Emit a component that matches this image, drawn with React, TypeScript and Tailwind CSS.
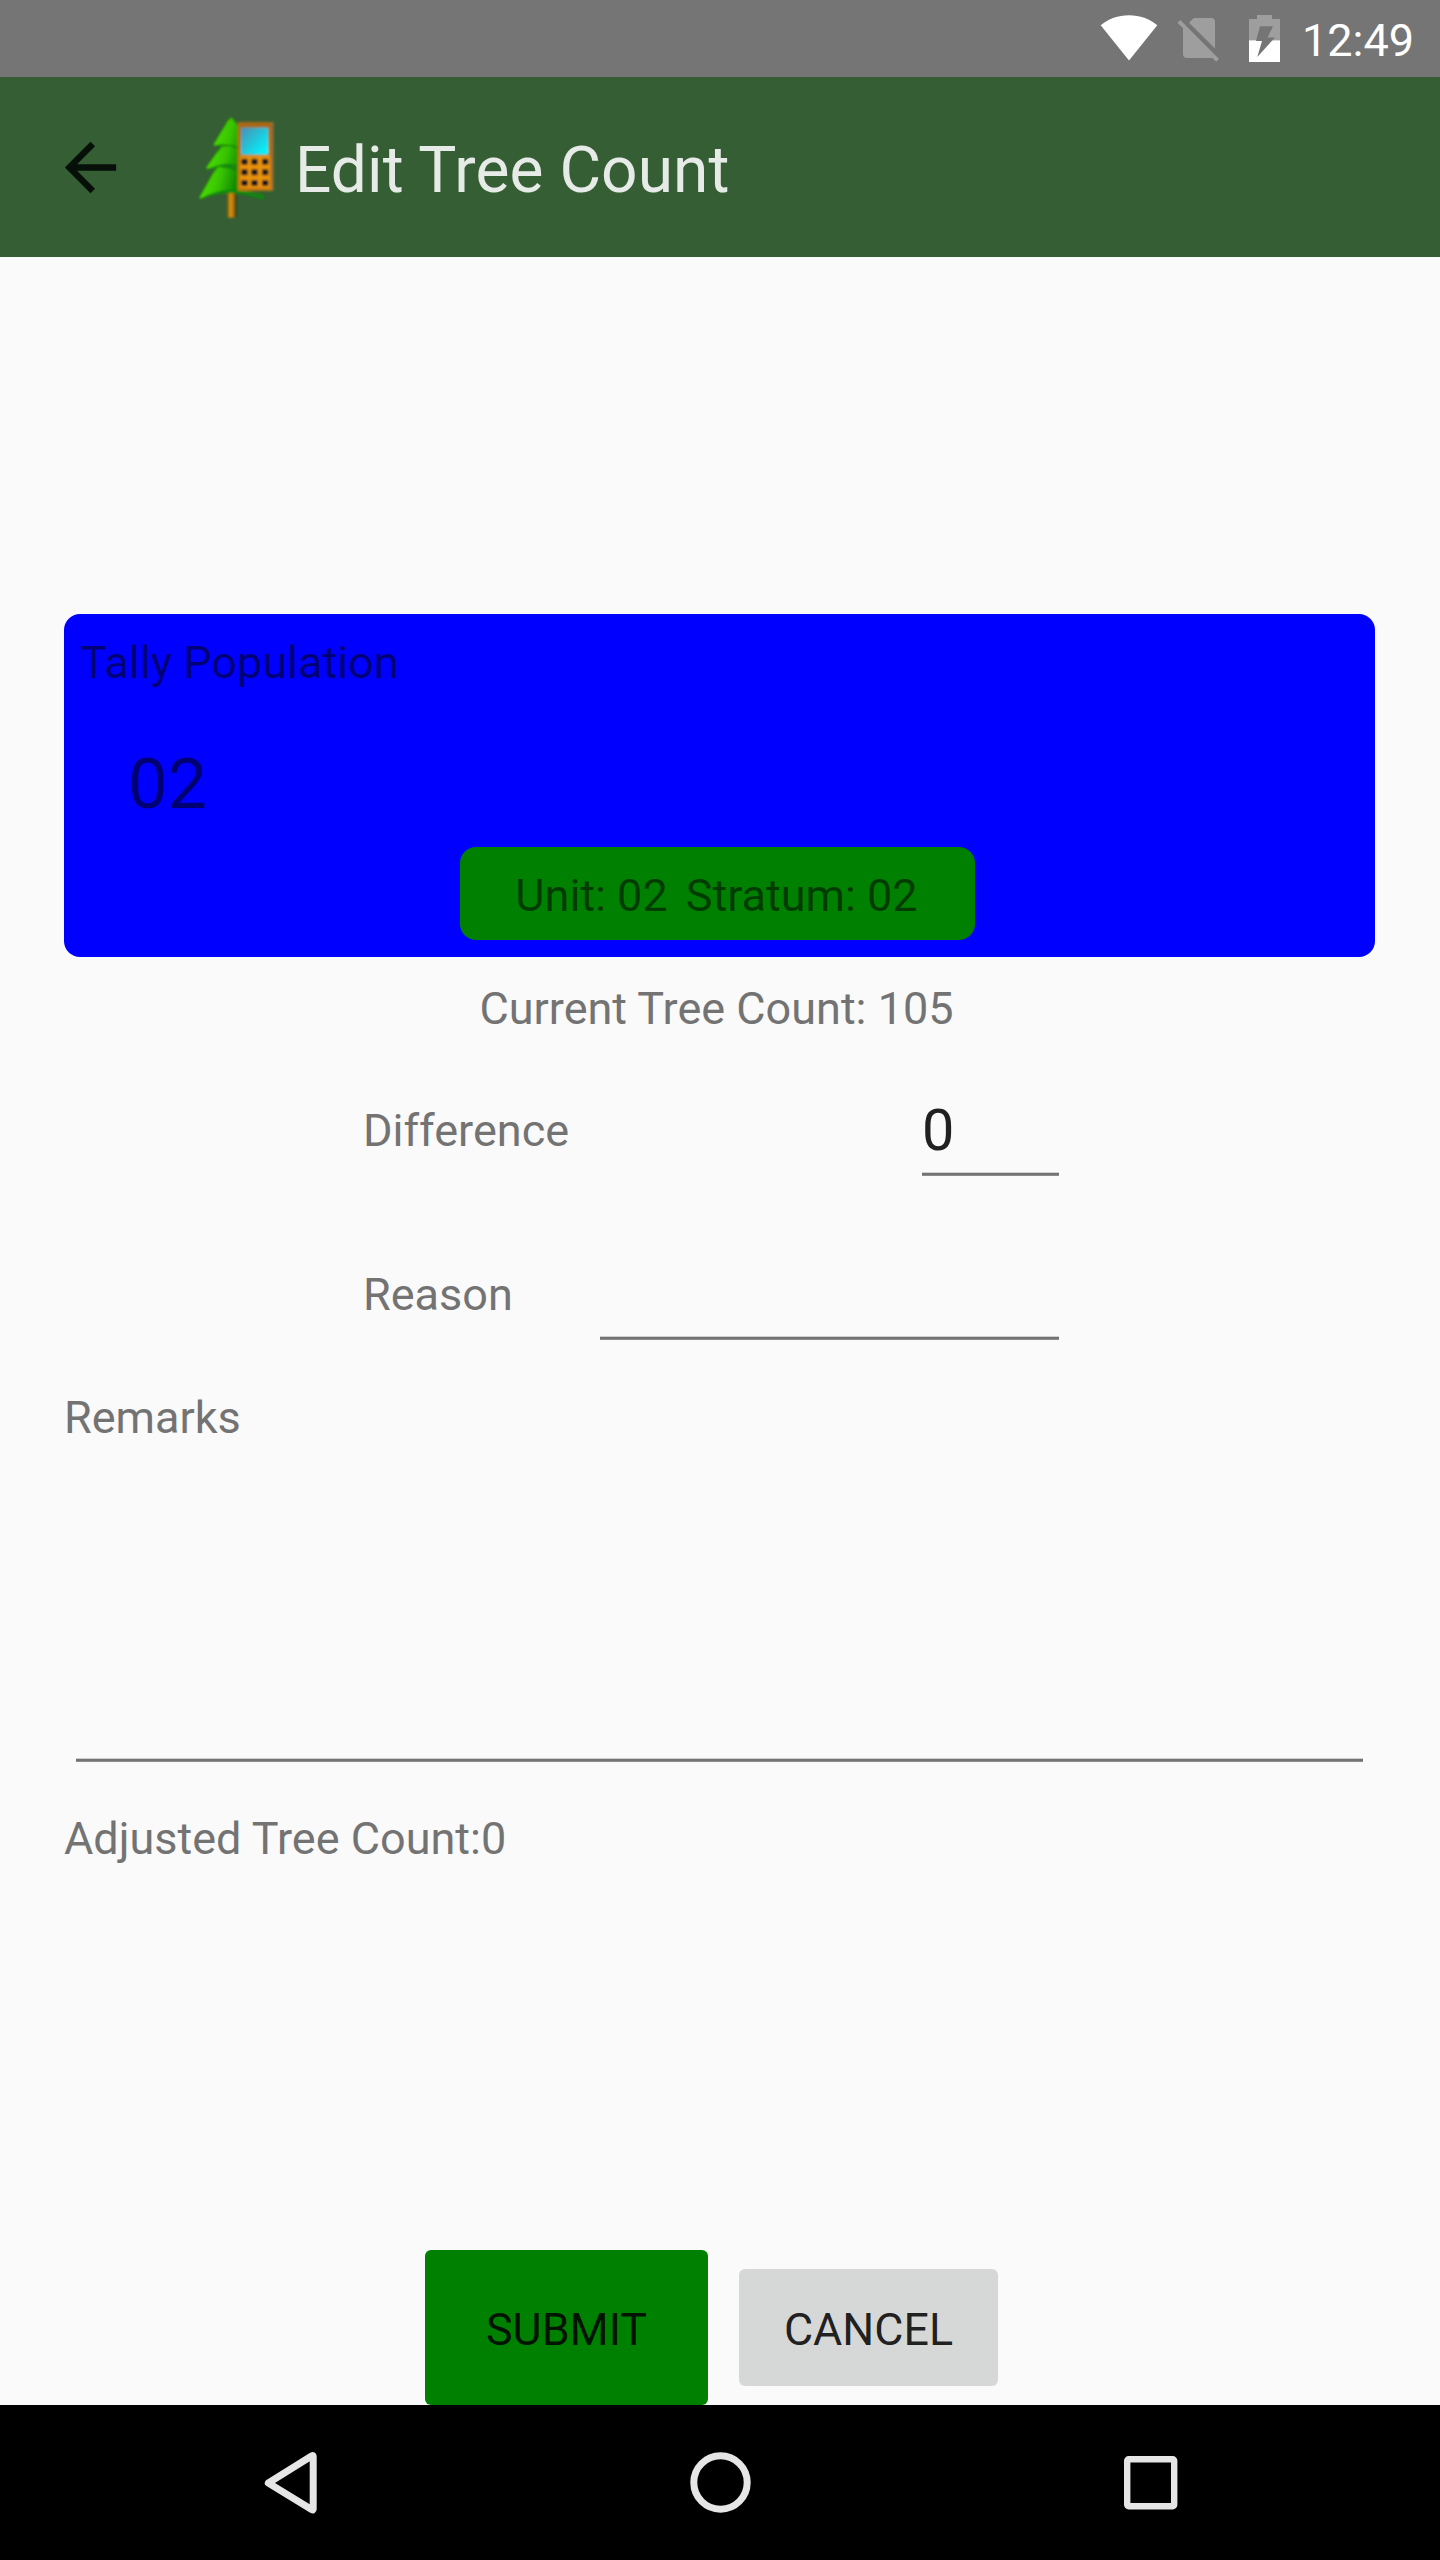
import type { ReactNode } from "react";

function StatusBar() {
  return (
    <div className="flex h-[77px] items-start justify-end bg-[#757575] pr-[26px]">
      <svg className="mt-[15px] mr-[19px] h-[46px] w-[58px]" viewBox="0 0 58 46">
        <path d="M0.7 10.2C8.5 3.8 18 0.3 29 0.3s20.500 3.500 28.300 9.900L29 45.400z" fill="#fff" />
      </svg>
      <svg className="mt-[17px] mr-[30px] h-[46px] w-[42px]" viewBox="0 0 42 46">
        <path d="M12 5.800L16.800 1H34a4 4 0 0 1 4 4V31.500z" fill="#9e9e9e" />
        <path d="M3.300 3L0.500 5.800L6 11.300V37a4 4 0 0 0 4 4H35.500L39.200 44.800L42 42z" fill="#9e9e9e" />
      </svg>
      <svg className="mt-[15px] mr-[22px] h-[47px] w-[31px]" viewBox="0 0 31 47">
        <path d="M8 0H23V4H31V25.300H0V4H8z" fill="#9e9e9e" />
        <path d="M0 25.300H31V47H0z" fill="#fff" />
        <path d="M11 11.300H24L18.500 22.500H26L8.300 42L13 26H7z" fill="#757575" />
      </svg>
      <span className="mt-[14px] text-[45px] leading-[53px] text-white">12:49</span>
    </div>
  );
}

function TreeLogo() {
  const columns = [184, 214, 246];
  const rows = [176, 208, 240];
  return (
    <svg className="h-[130px] w-[120px]" viewBox="0 0 360 390">
      <defs>
        <linearGradient id="leaf" x1="0" y1="0" x2="1" y2="0.3">
          <stop offset="0.25" stopColor="#4be000" />
          <stop offset="0.5" stopColor="#38c400" />
          <stop offset="0.75" stopColor="#118a00" />
        </linearGradient>
        <linearGradient id="screen" x1="0" y1="0" x2="1" y2="1">
          <stop offset="0" stopColor="#4a8fb0" />
          <stop offset="0.9" stopColor="#00f4ff" />
        </linearGradient>
        <linearGradient id="trunk" x1="0" y1="0" x2="1" y2="0">
          <stop offset="0" stopColor="#a86a00" />
          <stop offset="0.45" stopColor="#dc9410" />
          <stop offset="1" stopColor="#7a4c00" />
        </linearGradient>
        <linearGradient id="shell" x1="0" y1="0" x2="0" y2="1">
          <stop offset="0" stopColor="#a96815" />
          <stop offset="0.5" stopColor="#b8700f" />
          <stop offset="1" stopColor="#c8780c" />
        </linearGradient>
        <filter id="soft" x="-10%" y="-10%" width="120%" height="120%">
          <feGaussianBlur stdDeviation="2.4" />
        </filter>
      </defs>
      <g filter="url(#soft)">
        <path d="M143 272H166V353H143z" fill="url(#trunk)" />
        <path d="M166 275h5v77h-5z" fill="#2b4a20" />
        <path
          d="M154 52L165 64L178 85V268Q215 284 250 284V297Q205 282 155 278Q100 280 61 297L58 292L108 203L80 208L78 203L126 134L103 138L100 134L143 62z"
          fill="url(#leaf)"
          stroke="#1d7a10"
          strokeWidth="2"
        />
        <path d="M103 137Q140 128 178 140V150L150 138L126 140L112 160L122 137z" fill="#15880a" />
        <path d="M80 207L108 198Q145 186 178 196V218L150 206L116 200L98 222L108 203z" fill="#15880a" />
        <path d="M61 296Q110 268 160 269Q215 272 250 288V297Q205 282 155 279Q100 280 61 296z" fill="#0f8a0a" />
        <path d="M173 66H280V272H173z" fill="url(#shell)" />
        <path d="M276 66h5v206h-5z" fill="#7f6a3c" />
        <path d="M183 83H265V164H183z" fill="url(#screen)" />
        <path d="M180 168H270V264H180z" fill="#e8920f" />
        {rows.map((y) => columns.map((x) => <rect key={`${x}-${y}`} x={x} y={y} width="19" height="18" rx="4" fill="#14161c" />))}
      </g>
    </svg>
  );
}

function AppBar() {
  return (
    <header className="flex h-[180px] items-start bg-[#355e35]">
      <svg className="mt-[52px] ml-[52px] size-[77px]" viewBox="0 0 24 24">
        <path d="M20 11H7.830l5.590-5.590L12 4l-8 8 8 8 1.410-1.410L7.830 13H20v-2z" fill="#070f09" />
      </svg>
      <div className="mt-[23px] ml-[51px] w-[115px]">
        <TreeLogo />
      </div>
      <h1 className="mt-[56px] text-[64px] leading-[75px] tracking-[0.07px] text-[#e7ebe7]">Edit Tree Count</h1>
    </header>
  );
}

function TallyCard() {
  return (
    <section className="h-[343px] w-[1311px] rounded-[16px] bg-[#0000ff] text-black/54">
      <p className="pt-[22px] pl-4">Tally Population</p>
      <p className="mt-[54px] pl-16 text-[70.4px] leading-[82px]">02</p>
      <div className="mt-[22px] ml-[396px] flex h-[93px] w-[515px] items-center justify-center gap-[18px] rounded-[16px] bg-[#008000] pt-1 pr-[2px]">
        <span>Unit: 02</span>
        <span>Stratum: 02</span>
      </div>
    </section>
  );
}

function Underline() {
  return <div className="h-1 border-t border-b border-t-[#cfcfcf] border-b-[#8c8c8c] bg-[#737373]" />;
}

function Field({ label, width, children }: { label: string; width: string; children?: ReactNode }) {
  return (
    <div className="flex h-20 justify-between">
      <span className="pt-2">{label}</span>
      <div className={`flex flex-col justify-between ${width}`}>
        <span className="h-[69px] pt-px text-[57.6px] leading-[68px] text-[#212121]">{children}</span>
        <Underline />
      </div>
    </div>
  );
}

function NavBar() {
  return (
    <nav className="flex h-[155px] items-center justify-between bg-black pr-[258px] pl-[260px]">
      <svg className="size-[68px]" viewBox="0 0 68 68" fill="none" stroke="#e6e6e6" strokeWidth="7" strokeLinejoin="round">
        <path d="M8.300 34L52 6.800Q53.200 6 53.200 7.500V60Q53.200 61.500 52 60.700L8.300 34z" />
      </svg>
      <svg className="size-[68px]" viewBox="0 0 68 68" fill="none" stroke="#e6e6e6" strokeWidth="7">
        <circle cx="33.500" cy="33.500" r="26.700" />
      </svg>
      <svg className="size-[68px]" viewBox="0 0 68 68" fill="none" stroke="#e6e6e6" strokeWidth="6.400">
        <rect x="13.200" y="10.200" width="47" height="47" rx="1.500" />
      </svg>
    </nav>
  );
}

export default function App() {
  return (
    <div className="flex h-[2560px] w-[1440px] flex-col bg-[#fafafa] font-['Roboto',sans-serif] text-[45px] leading-[53px] text-[#737373] [font-variant-ligatures:none]">
      <StatusBar />
      <AppBar />
      <main className="flex flex-1 flex-col px-16 pt-[357px]">
        <TallyCard />
        <p className="mt-[25px] pr-[7px] text-center">Current Tree Count: 105</p>
        <div className="mt-[61px] ml-[299px] flex w-[696px] flex-col gap-[84px]">
          <Field label="Difference" width="w-[137px]">0</Field>
          <Field label="Reason" width="w-[459px]" />
        </div>
        <p className="mt-[51px]">Remarks</p>
        <div className="mt-[314px] mr-[13px] ml-3">
          <Underline />
        </div>
        <p className="mt-[50px]">Adjusted Tree Count:0</p>
        <div className="mt-auto ml-[361px] flex items-center gap-[31px] text-[44.8px]">
          <button className="h-[155px] w-[283px] rounded-[6px] bg-[#008000] pt-1 text-black/87">SUBMIT</button>
          <button className="h-[117px] w-[259px] rounded-[6px] bg-[#d6d7d7] pt-1 text-black/87">CANCEL</button>
        </div>
      </main>
      <NavBar />
    </div>
  );
}
